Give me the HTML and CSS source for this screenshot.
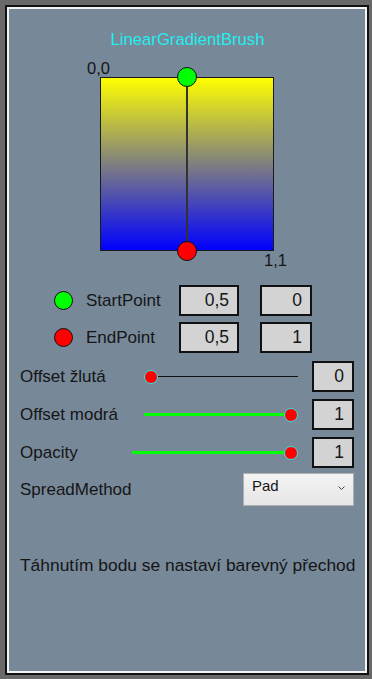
FILE: index.html
```html
<!DOCTYPE html>
<html lang="cs">
<head>
  <meta charset="UTF-8" />
  <title>LinearGradientBrush</title>
  <link rel="stylesheet" href="styles.css">
</head>
<body>
  <div class="window">
    <div class="panel">
      <div class="title">LinearGradientBrush</div>

      <div class="stage">
        <span class="corner corner-start">0,0</span>
        <div class="square">
          <div class="axis"></div>
          <div class="point point-start"></div>
          <div class="point point-end"></div>
        </div>
        <span class="corner corner-end">1,1</span>
      </div>

      <div class="points">
        <span class="dot dot-green"></span>
        <span class="point-label">StartPoint</span>
        <div class="field field-x">0,5</div>
        <div class="field field-y">0</div>

        <span class="dot dot-red"></span>
        <span class="point-label">EndPoint</span>
        <div class="field field-x">0,5</div>
        <div class="field field-y">1</div>
      </div>

      <div class="slider-row">
        <span class="row-label">Offset žlutá</span>
        <div class="slider slider-yellow">
          <div class="track track-rest" style="left: 7px;"></div>
          <div class="thumb" style="left: 0px;"></div>
        </div>
        <div class="field field-small">0</div>
      </div>

      <div class="slider-row">
        <span class="row-label">Offset modrá</span>
        <div class="slider slider-blue">
          <div class="track track-fill" style="width: 147px;"></div>
          <div class="thumb" style="right: 0px;"></div>
        </div>
        <div class="field field-small">1</div>
      </div>

      <div class="slider-row">
        <span class="row-label">Opacity</span>
        <div class="slider slider-opacity">
          <div class="track track-fill" style="width: 159px;"></div>
          <div class="thumb" style="right: 0px;"></div>
        </div>
        <div class="field field-small">1</div>
      </div>

      <div class="combo-row">
        <span class="row-label">SpreadMethod</span>
        <div class="combo">
          <span>Pad</span>
          <svg class="chevron" width="7" height="5" viewBox="0 0 7 5">
            <path d="M0.5 0.5 L3.5 3.5 L6.5 0.5" fill="none" stroke="#444" stroke-width="1"/>
          </svg>
        </div>
      </div>

      <p class="hint">Táhnutím bodu se nastaví barevný přechod</p>
    </div>
  </div>
</body>
</html>
```

FILE: styles.css
```css
* {
  box-sizing: border-box;
}

body {
  margin: 0;
  padding: 5px;
  background: #696969;
  font-family: 'Liberation Sans', Arial, sans-serif;
  color: #151515;
}

.window {
  width: 364px;
  height: 670px;
  border: 2px solid #111;
}

.panel {
  height: 100%;
  border: 2px solid #f4f4f4;
  background: #778899;
  padding: 21px 11px 0 11px;
}

.title {
  text-align: center;
  color: #22eeee;
  font-size: 16.7px;
  line-height: 20px;
  padding-left: 1px;
}

/* gradient preview */
.stage {
  position: relative;
  height: 235px;
  padding-top: 27px;
}

.square {
  position: relative;
  width: 174px;
  height: 174px;
  margin-left: 80px;
  border: 1px solid #1a1a1a;
  background: linear-gradient(to bottom, #ffff00, #0000ff);
}

.axis {
  position: absolute;
  left: 85px;
  top: 0;
  width: 2px;
  height: 172px;
  background: #333;
}

.point {
  position: absolute;
  width: 20px;
  height: 20px;
  left: 76px;
  border-radius: 50%;
  border: 1px solid #111;
}

.point-start {
  top: -11px;
  background: #00ff00;
}

.point-end {
  bottom: -11px;
  background: #ff0000;
}

.corner {
  position: absolute;
  font-size: 16.5px;
  line-height: 18px;
}

.corner-start {
  left: 67px;
  top: 9px;
}

.corner-end {
  left: 244px;
  top: 201px;
}

/* start / end point */
.points {
  display: grid;
  grid-template-columns: 19px 80px 60px 60px;
  column-gap: 13px;
  row-gap: 6px;
  align-items: center;
  padding-left: 34px;
}

.points .field-y {
  margin-left: 8px;
}

.dot {
  width: 19px;
  height: 19px;
  border-radius: 50%;
  border: 1px solid #111;
}

.dot-green {
  background: #00ff00;
}

.dot-red {
  background: #ff0000;
}

.point-label,
.row-label {
  font-size: 17px;
  line-height: 20px;
}

.field {
  height: 31px;
  border: 2px solid #111;
  background: #d3d3d3;
  text-align: right;
  font-size: 17.5px;
  line-height: 27px;
  padding-right: 8px;
}

.field-small {
  width: 42px;
}

/* sliders */
.slider-row {
  display: flex;
  align-items: center;
  gap: 14px;
  margin-top: 7px;
}

.points + .slider-row {
  margin-top: 8px;
}

.slider-row .row-label {
  flex: 1;
}

.slider {
  position: relative;
  height: 16px;
}

.slider-yellow {
  width: 154px;
}

.slider-blue {
  width: 154px;
}

.slider-opacity {
  width: 166px;
}

.track {
  position: absolute;
  top: 7px;
}

.track-rest {
  right: 0;
  height: 1px;
  background: #111;
}

.track-fill {
  left: 0;
  top: 6px;
  height: 3px;
  background: #00ff00;
}

.thumb {
  position: absolute;
  top: 1px;
  width: 14px;
  height: 14px;
  border-radius: 50%;
  background: #ff0000;
  border: 1px solid #2ee6e6;
}

/* spread method */
.combo-row {
  display: flex;
  align-items: center;
  justify-content: space-between;
  margin-top: 5px;
}

.combo {
  position: relative;
  width: 111px;
  height: 33px;
  border: 1px solid #b0b0b0;
  background: linear-gradient(to bottom, #f3f3f3, #e6e6e6);
  font-size: 15px;
  line-height: 24px;
  padding-left: 8px;
}

.chevron {
  position: absolute;
  right: 8px;
  top: 12px;
}

.hint {
  margin: 49px 0 0 0;
  font-size: 17.4px;
  line-height: 20px;
  white-space: nowrap;
}
```
